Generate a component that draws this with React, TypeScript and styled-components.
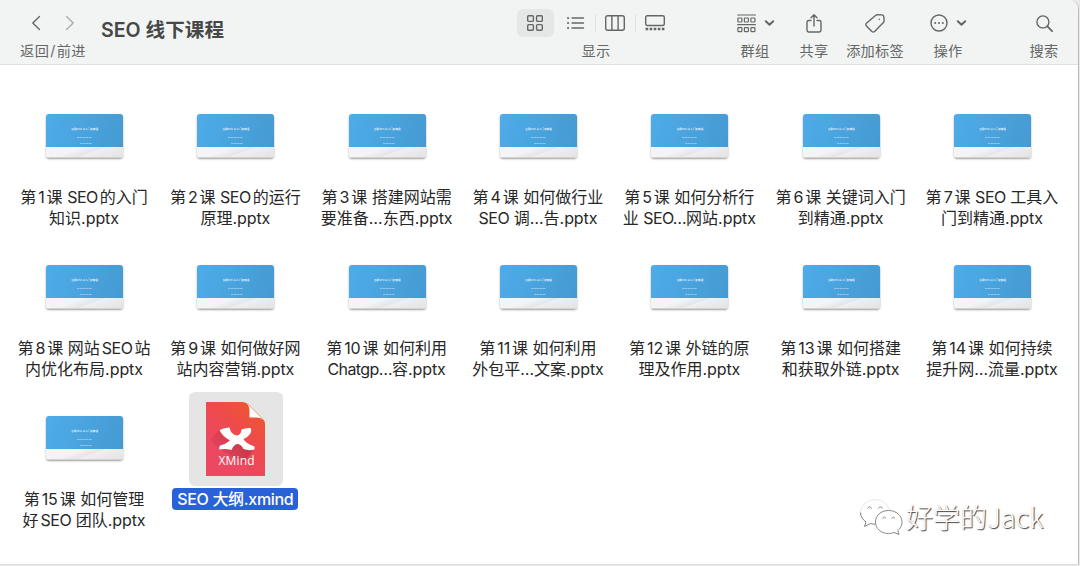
import React from "react";
import styled, { createGlobalStyle } from "styled-components";

const GlobalStyle = createGlobalStyle`
  * { box-sizing: border-box; }
  body {
    margin: 0;
    background: #fff;
    font-family: Inter, "Noto Sans CJK SC", sans-serif;
    overflow: hidden;
  }
`;

const Desktop = styled.div`
  width: 1080px;
  height: 566px;
  background: #e9e9e9;
  overflow: hidden;
`;

const Window = styled.main`
  position: relative;
  width: 1079px;
  height: 565px;
  background: #fff;
  border-right: 1px solid #b9bbba;
  border-bottom: 1px solid #dcdcdc;
  border-top-right-radius: 9px;
  overflow: hidden;
`;

const Toolbar = styled.header`
  display: flex;
  height: 65px;
  background: #f2f4f3;
  border-bottom: 1px solid #dfe1e0;
  color: #646766;
`;

const Group = styled.div<{ $w: number; $ml?: number }>`
  flex: none;
  width: ${(p) => p.$w}px;
  margin-left: ${(p) => p.$ml ?? 0}px;
  padding-top: 9px;
  display: flex;
  flex-direction: column;
  align-items: center;
`;

const IconRow = styled.div<{ $gap?: number }>`
  display: flex;
  align-items: center;
  justify-content: center;
  gap: ${(p) => p.$gap ?? 0}px;
  height: 28px;
`;

const Caption = styled.span<{ $spacing?: number }>`
  margin-top: 4px;
  font-size: 14.2px;
  line-height: 20px;
  letter-spacing: ${(p) => p.$spacing ?? 0.2}px;
  white-space: nowrap;
`;

const Slash = styled.span`
  margin: 0 1.2px 0 1px;
`;

const Title = styled.h1`
  margin: 15px 0 0 14px;
  width: 130px;
  font-size: 19.6px;
  line-height: 30px;
  font-weight: 600;
  letter-spacing: 0;
  color: #454847;
  white-space: nowrap;
`;

const ViewButton = styled.div<{ $active?: boolean }>`
  display: flex;
  align-items: center;
  justify-content: center;
  width: 37px;
  height: 28px;
  border-radius: 6px;
  background: ${(p) => (p.$active ? "#e5e7e6" : "transparent")};
`;

const Divider = styled.i<{ $hidden?: boolean }>`
  width: 1px;
  height: 18px;
  background: ${(p) => (p.$hidden ? "transparent" : "#e0e2e1")};
`;

const Views = styled.div`
  margin-left: -2px;
`;

const Stroke = styled.svg`
  display: block;
  flex: none;
  overflow: visible;
  fill: none;
  stroke: currentColor;
  stroke-width: 1.4;
  stroke-linecap: round;
  stroke-linejoin: round;
`;

const Files = styled.section`
  display: grid;
  grid-template-columns: repeat(7, 151.33px);
  grid-auto-rows: 151px;
  padding: 25px 0 0 9px;
`;

const File = styled.article`
  display: flex;
  flex-direction: column;
  align-items: center;
`;

const IconBox = styled.div<{ $selected?: boolean }>`
  display: flex;
  align-items: center;
  justify-content: center;
  width: 94px;
  height: 94px;
  border-radius: 6px;
  background: ${(p) => (p.$selected ? "#e5e5e5" : "transparent")};
`;

const Slide = styled.div`
  display: flex;
  flex-direction: column;
  width: 77px;
  height: 44px;
  margin-top: -2px;
  border-radius: 3px;
  overflow: hidden;
  box-shadow: 0 1px 2px rgba(0, 0, 0, 0.38);
`;

const SlideTop = styled.div`
  display: flex;
  flex-direction: column;
  align-items: center;
  height: 33px;
  background: linear-gradient(110deg, #4eacea, #459ad1);
`;

const SlideFoot = styled.div`
  flex: 1;
  background: linear-gradient(160deg, #f4f4f4 35%, #e6e6e6 55%, #efefef 58%, #e3e3e3);
  border-bottom: 1px solid #d2d2d2;
`;

const SlideTitle = styled.span`
  margin-top: 13px;
  font-size: 2.6px;
  line-height: 4px;
  font-weight: 500;
  color: rgba(255, 255, 255, 0.9);
  white-space: nowrap;
`;

const SlideMark = styled.i<{ $w: number; $top: number; $x?: number }>`
  display: block;
  width: ${(p) => p.$w}px;
  height: 1px;
  margin-top: ${(p) => p.$top}px;
  margin-left: ${(p) => p.$x ?? 0}px;
  background: repeating-linear-gradient(90deg, #fff 0 2px, rgba(255, 255, 255, 0.6) 2px 3px);
  opacity: 0.38;
`;

const Name = styled.div`
  margin-top: 3px;
  padding-right: 1.4px;
  display: flex;
  flex-direction: column;
  align-items: center;
  font-size: 16px;
  line-height: 21px;
  color: #272727;
`;

const Line = styled.span`
  display: block;
  height: 21px;
  white-space: nowrap;
`;

const SelectedName = styled(Name)`
  margin-top: 2px;
`;

const SelectedLine = styled(Line)`
  height: 22px;
  padding: 0 5px;
  border-radius: 4px;
  font-weight: 500;
  line-height: 22px;
  letter-spacing: -0.33px;
  background: #2961d9;
  color: #fff;
`;

const Run = styled.span<{ $l: boolean; $r: boolean; $spacing: number }>`
  letter-spacing: ${(p) => p.$spacing}px;
  margin-left: ${(p) => (p.$l ? 2 : 0)}px;
  margin-right: ${(p) => (p.$r ? 2 : 0)}px;
`;

const Watermark = styled.div`
  position: absolute;
  left: 859px;
  top: 496px;
  display: flex;
  align-items: center;
  gap: 3px;
`;

const WatermarkText = styled.span`
  font-family: "Noto Sans CJK SC", sans-serif;
  font-weight: 300;
  font-size: 27px;
  line-height: 42px;
  color: #fff;
  white-space: nowrap;
  text-shadow: 1px 1px 1px rgba(0, 0, 0, 0.75), 0 0 1px rgba(0, 0, 0, 0.2);
`;

const Bubbles = styled.svg`
  display: block;
  overflow: visible;
  fill: #fff;
  stroke-linejoin: round;
`;

const cjk = /[\u4e00-\u9fff]/;

const tracking = (run: string) => {
  if (run === "SEO") return -0.5;
  if (/^(Chatgp|SEO)…$/.test(run)) return -0.6;
  return -0.1;
};

/* Latin words and numbers get a little air where they touch a Han character. */
function Spaced({ text }: { text: string }) {
  const parts = text.split(/([A-Za-z0-9]+…?)/);
  return (
    <>
      {parts.map((part, i) =>
        i % 2 === 1 ? (
          <Run
            key={i}
            $spacing={tracking(part)}
            $l={cjk.test(parts[i - 1].slice(-1))}
            $r={!part.endsWith("…") && cjk.test(parts[i + 1].charAt(0))}
          >
            {part}
          </Run>
        ) : (
          part
        )
      )}
    </>
  );
}

const files: string[][] = [
  ["第1课 SEO的入门", "知识.pptx"],
  ["第2课 SEO的运行", "原理.pptx"],
  ["第3课 搭建网站需", "要准备…东西.pptx"],
  ["第4课 如何做行业", "SEO 调…告.pptx"],
  ["第5课 如何分析行", "业 SEO…网站.pptx"],
  ["第6课 关键词入门", "到精通.pptx"],
  ["第7课 SEO 工具入", "门到精通.pptx"],
  ["第8课 网站SEO站", "内优化布局.pptx"],
  ["第9课 如何做好网", "站内容营销.pptx"],
  ["第10课 如何利用", "Chatgp…容.pptx"],
  ["第11课 如何利用", "外包平…文案.pptx"],
  ["第12课 外链的原", "理及作用.pptx"],
  ["第13课 如何搭建", "和获取外链.pptx"],
  ["第14课 如何持续", "提升网…流量.pptx"],
  ["第15课 如何管理", "好SEO 团队.pptx"],
];

const Chevron = () => (
  <Stroke width="9" height="6" viewBox="0 0 9 6">
    <path d="M.8 1.2 4.5 4.8 8.2 1.2" strokeWidth="2" />
  </Stroke>
);

const XMindIcon = () => (
  <svg width="59" height="74" viewBox="0 0 59 74">
    <defs>
      <linearGradient id="sheet" x1="0.9" y1="0" x2="0.35" y2="0.75">
        <stop offset="0" stopColor="#ef5a28" />
        <stop offset="0.55" stopColor="#ee4a4d" />
        <stop offset="1" stopColor="#ec4862" />
      </linearGradient>
      <linearGradient id="shade" x1="0.7" y1="0.3" x2="0.1" y2="0.5">
        <stop offset="0" stopColor="#b03045" stopOpacity="0.6" />
        <stop offset="1" stopColor="#c93450" stopOpacity="0.3" />
      </linearGradient>
    </defs>
    <path d="M0 0H37Q42 1 44 4L57 17Q59 19 59 23V74H0Z" fill="url(#sheet)" />
    <path d="M14 27 4 38 13 47 38 61 48 47 30 36Z" fill="url(#shade)" />
    <path d="M40 .5Q43 3 43.500 8V15.500H51Q55 15.500 58 18.500L43 3.500Q41.500 1.500 40 .5Z" fill="#fff" />
    <path
      d="M13.500 28Q18 25.500 23.500 25.500Q25 33 31 33.500Q35 33 35.500 27.500Q40 25.500 44.500 26Q46 28 44.500 31.500Q42 35 37.500 37Q39 41 48.500 44.500L48.500 47.500Q43 49 37.500 47Q35 42 31 42Q27.500 43 25.500 48Q20 46.500 13.500 47.500Q12.500 46 14 43.500Q20 42 24 38.500Q16 34 13.500 28Z"
      fill="#fff"
    />
    <text x="30.500" y="63" fill="#fff" fontSize="12" fontFamily="'Open Sans', sans-serif" textAnchor="middle" textLength="36">
      XMind
    </text>
  </svg>
);

const BubbleLogo = () => (
  <Bubbles width="44" height="38" viewBox="0 0 44 38">
    <path
      d="M16 1.500C8 1.500 1.500 7.500 1.500 14.500c0 4 2 7 5.500 9.500L5.500 28.500l6-3c2 .6 4 .8 6 .6C15.500 18 21 12 30.500 12.500 29 6 23 1.500 16 1.500Z"
      stroke="#dcdcdc"
      strokeWidth=".7"
    />
    <path d="M1.500 14.500c0 4 2 7 5.500 9.500L5.500 28.500l6-3c2 .6 3.500.8 5 .7" fill="none" stroke="#8a8a8a" />
    <path
      d="M29.500 12.500C22 12.500 16.500 17.500 16.500 24S22 35.500 29.500 35.500c2 0 3.700-.3 5.500-1l5 2-1.200-4C41.500 30.500 43 27.500 43 24 43 17.500 37 12.500 29.500 12.500Z"
      stroke="#8a8a8a"
    />
    <path d="M8.500 10.500q2-3.500 4 0M19.500 10.500q2-3.500 4 0M23.500 20.500q1.800-3 3.600 0M32.500 20.500q1.800-3 3.600 0" fill="none" stroke="#8a8a8a" />
  </Bubbles>
);

export default function App() {
  return (
    <Desktop>
      <GlobalStyle />
      <Window>
        <Toolbar>
          <Group $w={68} $ml={19}>
            <IconRow $gap={26}>
              <Stroke width="8" height="14" viewBox="0 0 8 14">
                <path d="M7.500.5.800 7l6.700 6.500" />
              </Stroke>
              <Stroke width="8" height="14" viewBox="0 0 8 14" opacity="0.5">
                <path d="M.5.5 7.200 7 .5 13.500" />
              </Stroke>
            </IconRow>
            <Caption $spacing={0.35}>
              返回<Slash>/</Slash>前进
            </Caption>
          </Group>
          <Title>SEO 线下课程</Title>
          <Group $w={160} $ml={285}>
            <Views>
              <IconRow $gap={1}>
                <ViewButton $active>
                  <Stroke width="16" height="16" viewBox="0 0 16 16">
                    <rect x=".7" y=".7" width="5.700" height="5.700" rx="1" />
                    <rect x="9.600" y=".7" width="5.700" height="5.700" rx="1" />
                    <rect x=".7" y="9.600" width="5.700" height="5.700" rx="1" />
                    <rect x="9.600" y="9.600" width="5.700" height="5.700" rx="1" />
                  </Stroke>
                </ViewButton>
                <Divider $hidden />
                <ViewButton>
                  <Stroke width="17" height="12" viewBox="0 0 17 12">
                    <path d="M5 1h11.500M5 6h11.500M5 11h11.500" />
                    <path d="M1 1h.1M1 6h.1M1 11h.1" strokeWidth="2" />
                  </Stroke>
                </ViewButton>
                <Divider />
                <ViewButton>
                  <Stroke width="20" height="16" viewBox="0 0 20 16">
                    <rect x=".7" y=".7" width="18.600" height="14.600" rx="2" />
                    <path d="M6.900 1v14M13.100 1v14" />
                  </Stroke>
                </ViewButton>
                <Divider />
                <ViewButton>
                  <Stroke width="20" height="16" viewBox="0 0 20 16">
                    <rect x=".7" y=".7" width="18.600" height="9.800" rx="1.500" />
                    <path d="M.6 14h18.800" strokeWidth="2.400" strokeLinecap="butt" strokeDasharray="2.600 1.450" />
                  </Stroke>
                </ViewButton>
              </IconRow>
            </Views>
            <Caption>显示</Caption>
          </Group>

          <Group $w={42} $ml={58}>
            <IconRow $gap={9}>
              <Stroke width="19" height="19" viewBox="0 0 19 19">
                <g strokeWidth="1.200">
                  <path d="M.6 1h17.800M.6 10.700h17.800" />
                  {[4, 13.6].map((y) =>
                    [0.9, 7.4, 13.9].map((x) => (
                      <rect key={`${x}-${y}`} x={x} y={y} width="4" height="4" rx=".5" />
                    ))
                  )}
                </g>
              </Stroke>
              <Chevron />
            </IconRow>
            <Caption>群组</Caption>
          </Group>
          <Group $w={40} $ml={18}>
            <IconRow>
              <Stroke width="16" height="19" viewBox="0 0 16 19">
                <path d="M5 6.500H2.700Q1 6.500 1 8.200v8.100Q1 18 2.700 18h10.600q1.700 0 1.700-1.700V8.200q0-1.700-1.700-1.700H11M8 12V.8M5 3.700 8 .7l3 3" />
              </Stroke>
            </IconRow>
            <Caption>共享</Caption>
          </Group>
          <Group $w={62} $ml={10}>
            <IconRow>
              <Stroke width="20" height="19" viewBox="0 0 20 19">
                <path d="M10.800 1.300Q11.400.7 12.300.7L17 .9q1.700.2 1.900 1.900l.2 4.200q0 .9-.7 1.600L9.600 17.500q-1.400 1.200-2.700 0L1.400 12q-1.200-1.400 0-2.700Z" />
                <circle cx="14.300" cy="5.200" r=".8" fill="currentColor" stroke="none" />
              </Stroke>
            </IconRow>
            <Caption>添加标签</Caption>
          </Group>
          <Group $w={42} $ml={21}>
            <IconRow $gap={9}>
              <Stroke width="18" height="18" viewBox="0 0 18 18">
                <circle cx="9" cy="9" r="8" />
                <path d="M5.200 9h.1M9 9h.1M12.800 9h.1" strokeWidth="1.900" />
              </Stroke>
              <Chevron />
            </IconRow>
            <Caption>操作</Caption>
          </Group>
          <Group $w={40} $ml={55}>
            <IconRow>
              <Stroke width="17" height="17" viewBox="0 0 17 17">
                <circle cx="6.900" cy="6.900" r="6" />
                <path d="m11.400 11.400 4.700 4.700" strokeWidth="1.800" />
              </Stroke>
            </IconRow>
            <Caption>搜索</Caption>
          </Group>
        </Toolbar>

        <Files>
          {files.map((lines) => (
            <File key={lines[0]}>
              <IconBox>
                <Slide>
                  <SlideTop>
                    <SlideTitle>谷歌SEO 从入门到精通</SlideTitle>
                    <SlideMark $w={15} $top={6} />
                    <SlideMark $w={12} $top={5} $x={3} />
                  </SlideTop>
                  <SlideFoot />
                </Slide>
              </IconBox>
              <Name>
                {lines.map((l) => (
                  <Line key={l}>
                    <Spaced text={l} />
                  </Line>
                ))}
              </Name>
            </File>
          ))}
          <File>
            <IconBox $selected>
              <XMindIcon />
            </IconBox>
            <SelectedName>
              <SelectedLine>SEO 大纲.xmind</SelectedLine>
            </SelectedName>
          </File>
        </Files>

        <Watermark>
          <BubbleLogo />
          <WatermarkText>好学的Jack</WatermarkText>
        </Watermark>
      </Window>
    </Desktop>
  );
}
